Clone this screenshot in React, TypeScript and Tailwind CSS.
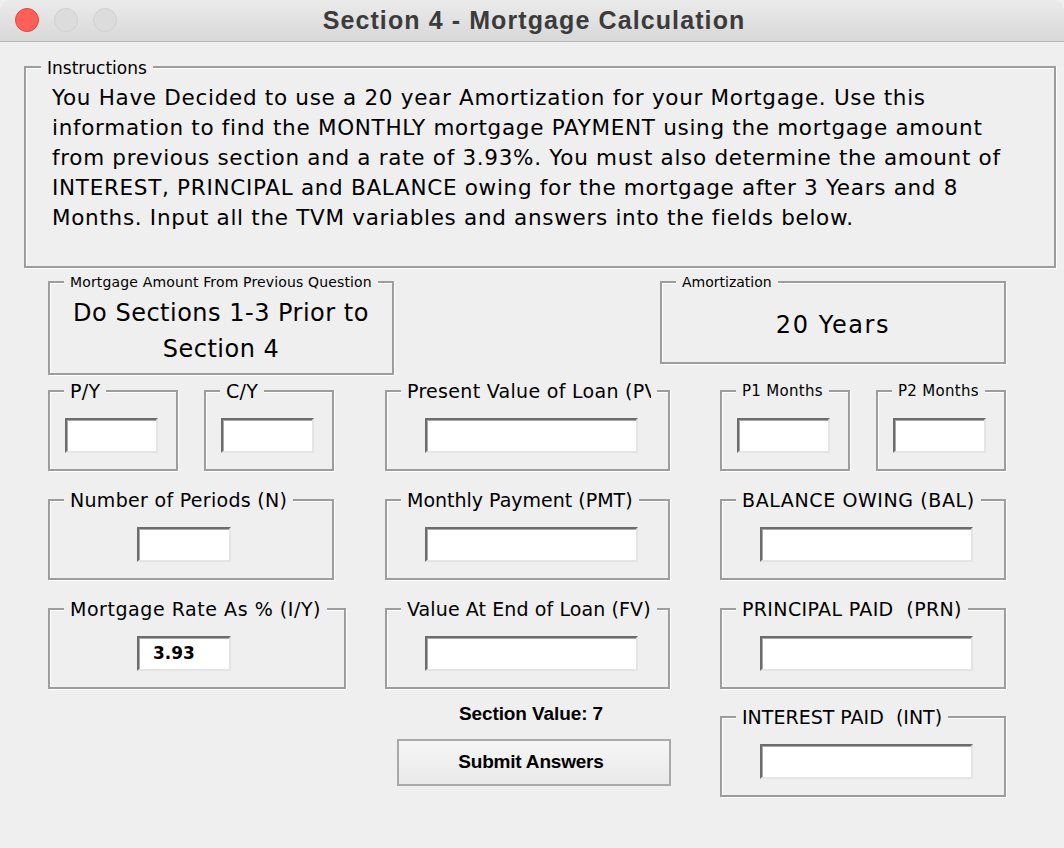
import React from "react";

const FONT = "font-['DejaVu_Sans','Open_Sans',sans-serif]";

function Group({
  label,
  className = "",
  labelClass = "",
  children,
}: {
  label: React.ReactNode;
  className?: string;
  labelClass?: string;
  children?: React.ReactNode;
}) {
  return (
    <div
      className={`relative shrink-0 border-2 border-[#9d9d9d] shadow-[inset_1px_1px_0_#ffffff,1px_1px_0_#ffffff] ${className}`}
    >
      <div
        className={`absolute top-[-1px] left-[14px] -translate-y-1/2 px-[6px] bg-[#efefef] leading-none whitespace-nowrap text-black ${labelClass}`}
      >
        {label}
      </div>
      {children}
    </div>
  );
}

function Field({ className = "", value }: { className?: string; value?: string }) {
  return (
    <div
      className={`h-[35px] bg-white border-2 border-t-[#6c6c6c] border-l-[#6c6c6c] border-b-[#e4e4e4] border-r-[#e4e4e4] shadow-[inset_1px_1px_0_#a9a9a9] flex items-center ${className}`}
    >
      {value ? (
        <span className="pl-[14px] text-[17px] font-bold text-black leading-none">{value}</span>
      ) : null}
    </div>
  );
}

export default function App() {
  const big = "text-[19px] tracking-[0.3px]";
  const small = "text-[15px] tracking-[0.3px]";
  return (
    <div className={`w-[1064px] h-[848px] bg-[#efefef] overflow-hidden ${FONT} text-black`}>
      {/* Title bar */}
      <div className="relative h-[42px] rounded-t-[10px] bg-gradient-to-b from-[#ebebeb] to-[#d8d8d8] border-b border-[#b8b8b8] flex items-center justify-center">
        <div className="absolute left-[15px] top-[8px] flex items-center gap-[15px]">
          <div className="w-[24px] h-[24px] rounded-full bg-[#fe5f57] border border-[#e2463f]" />
          <div className="w-[24px] h-[24px] rounded-full bg-[#dcdcdc] border border-[#d0d0d0]" />
          <div className="w-[24px] h-[24px] rounded-full bg-[#dcdcdc] border border-[#d0d0d0]" />
        </div>
        <div className="font-['Liberation_Sans',Arial,sans-serif] font-bold text-[25px] tracking-[1.1px] text-[#3b3b3b] leading-none pl-[4px]">
          Section 4 - Mortgage Calculation
        </div>
      </div>

      {/* Instructions */}
      <div className="mt-[24px] ml-[24px]">
        <Group
          label="Instructions"
          className="w-[1032px] h-[202px] pt-[15px] pl-[26px]"
          labelClass="left-[15px] text-[17px] top-[0px]"
        >
          <div className="text-[21.5px] leading-[30px] tracking-[0.7px]">
            <div>You Have Decided to use a 20 year Amortization for your Mortgage. Use this</div>
            <div>information to find the MONTHLY mortgage PAYMENT using the mortgage amount</div>
            <div>from previous section and a rate of 3.93%. You must also determine the amount of</div>
            <div>INTEREST, PRINCIPAL and BALANCE owing for the mortgage after 3 Years and 8</div>
            <div>Months. Input all the TVM variables and answers into the fields below.</div>
          </div>
        </Group>
      </div>

      {/* Row A */}
      <div className="mt-[13px] flex items-start pl-[48px]">
        <Group
          label="Mortgage Amount From Previous Question"
          className="w-[346px] h-[94px] pt-[12px]"
          labelClass="text-[14px] tracking-[0.15px]"
        >
          <div className="text-center text-[24px] leading-[36px] tracking-[0.5px]">
            <div>Do Sections 1-3 Prior to</div>
            <div>Section 4</div>
          </div>
        </Group>
        <Group label="Amortization" className="ml-[266px] w-[346px] h-[83px] pt-[24px]" labelClass="text-[14px]">
          <div className="text-center text-[24px] leading-[36px] tracking-[1.6px]">20 Years</div>
        </Group>
      </div>

      {/* Row B */}
      <div className="mt-[15px] flex items-start pl-[48px]">
        <Group label="P/Y" className="w-[130px] h-[81px] pt-[26px] pl-[15px]" labelClass={big}>
          <Field className="w-[93px]" />
        </Group>
        <Group label="C/Y" className="ml-[26px] w-[130px] h-[81px] pt-[26px] pl-[15px]" labelClass={big}>
          <Field className="w-[93px]" />
        </Group>
        <Group
          label={<span className="block w-[244px] overflow-hidden">Present Value of Loan (PV)</span>}
          className="ml-[51px] w-[285px] h-[81px] pt-[26px] pl-[38px]"
          labelClass={big}
        >
          <Field className="w-[213px]" />
        </Group>
        <Group label="P1 Months" className="ml-[50px] w-[130px] h-[81px] pt-[26px] pl-[15px]" labelClass={small}>
          <Field className="w-[93px]" />
        </Group>
        <Group label="P2 Months" className="ml-[26px] w-[130px] h-[81px] pt-[26px] pl-[15px]" labelClass={small}>
          <Field className="w-[93px]" />
        </Group>
      </div>

      {/* Row C */}
      <div className="mt-[28px] flex items-start pl-[48px]">
        <Group label="Number of Periods (N)" className="w-[286px] h-[81px] pt-[26px] pl-[87px]" labelClass={big}>
          <Field className="w-[94px]" />
        </Group>
        <Group label="Monthly Payment (PMT)" className="ml-[51px] w-[285px] h-[81px] pt-[26px] pl-[38px]" labelClass="text-[19px]">
          <Field className="w-[213px]" />
        </Group>
        <Group label="BALANCE OWING (BAL)" className="ml-[50px] w-[286px] h-[81px] pt-[26px] pl-[38px]" labelClass="text-[19px] tracking-[0.6px]">
          <Field className="w-[213px]" />
        </Group>
      </div>

      {/* Row D */}
      <div className="mt-[28px] flex items-start pl-[48px]">
        <Group label="Mortgage Rate As % (I/Y)" className="w-[298px] h-[81px] pt-[26px] pl-[87px]" labelClass="text-[19px] tracking-[0.55px]">
          <Field className="w-[94px]" value="3.93" />
        </Group>
        <Group label="Value At End of Loan (FV)" className="ml-[39px] w-[285px] h-[81px] pt-[26px] pl-[38px]" labelClass="text-[19px] tracking-[0.1px]">
          <Field className="w-[213px]" />
        </Group>
        <Group label={<span>PRINCIPAL PAID&nbsp; (PRN)</span>} className="ml-[50px] w-[286px] h-[81px] pt-[26px] pl-[38px]" labelClass="text-[19px] tracking-[0.35px]">
          <Field className="w-[213px]" />
        </Group>
      </div>

      {/* Row E */}
      <div className="mt-[15px] flex items-start pl-[397px]">
        <div className="w-[274px] flex flex-col items-center">
          <div className="h-[20px] leading-[20px] text-[19px] font-bold font-['Liberation_Sans',sans-serif] tracking-[-0.1px] pr-[6px]">
            Section Value: 7
          </div>
          <div className="mt-[15px] w-[274px] h-[47px] border-2 border-[#a9a9a9] bg-gradient-to-b from-[#f6f6f6] to-[#e9e9e9] flex items-center justify-center">
            <span className="text-[19px] font-bold font-['Liberation_Sans',sans-serif] tracking-[-0.2px] pr-[6px]">
              Submit Answers
            </span>
          </div>
        </div>
        <div className="ml-[49px] mt-[12px]">
          <Group label={<span>INTEREST PAID&nbsp; (INT)</span>} className="w-[286px] h-[81px] pt-[26px] pl-[38px]" labelClass="text-[19px]">
            <Field className="w-[213px]" />
          </Group>
        </div>
      </div>
    </div>
  );
}
